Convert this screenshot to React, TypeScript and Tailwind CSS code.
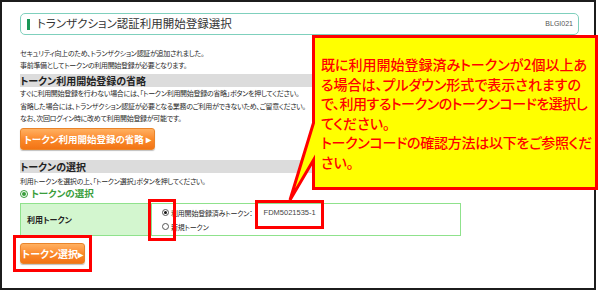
import React from 'react';

function Radio({ checked }: { checked?: boolean }) {
  return (
    <span className="w-[7px] h-[7px] rounded-full border border-[#555] bg-white flex items-center justify-center shrink-0">
      {checked && <span className="w-[3px] h-[3px] rounded-full bg-[#111]" />}
    </span>
  );
}

function OrangeButton({ label, className }: { label: string; className: string }) {
  return (
    <button
      className={`rounded-[3px] border border-[#e9842a] bg-linear-to-b from-[#ffb060] via-[#fb8a2a] to-[#f27414] text-white font-bold whitespace-nowrap flex items-center justify-center shadow-[0_1px_1px_rgba(0,0,0,0.25)] ${className}`}
    >
      {label}
    </button>
  );
}

export default function App() {
  return (
    <div className="relative w-[600px] h-[290px] bg-white font-['Noto_Sans_CJK_JP',sans-serif] [font-feature-settings:'palt'] text-[#2a2a2a] overflow-hidden">
      {/* page frame */}
      <div className="w-[596px] h-[290px] border-2 border-[#1c1c1c] pl-[18px] pr-[15px] pt-[11px]">
        {/* title */}
        <div className="h-[22px] rounded-[5px] border-[1.5px] border-[#7fd0bd] flex items-center pl-[6px] pr-[5px]">
          <span className="w-[3px] h-[11px] bg-[#1a9656]" />
          <span className="ml-[7px] text-[11.5px] leading-none text-[#333]">
            トランザクション認証利用開始登録選択
          </span>
          <span className="ml-auto text-[7px] text-[#555] font-['Liberation_Sans',sans-serif]">BLGI021</span>
        </div>

        {/* intro */}
        <div className="mt-[12px] text-[7px] tracking-[-0.3px] leading-[12px] whitespace-nowrap">
          <p>セキュリティ向上のため、トランザクション認証が追加されました。</p>
          <p>事前準備としてトークンの利用開始登録が必要となります。</p>
        </div>

        {/* skip section */}
        <div className="mt-[3px] h-[13px] bg-[#dcdcdc] flex items-center text-[10px] font-bold text-[#222] leading-none">
          トークン利用開始登録の省略
        </div>
        <div className="text-[7px] tracking-[-0.3px] leading-[12.5px] whitespace-nowrap">
          <p>すぐに利用開始登録を行わない場合には、「トークン利用開始登録の省略」ボタンを押してください。</p>
          <p>省略した場合には、トランザクション認証が必要となる業務のご利用ができないため、ご留意ください。</p>
          <p>なお、次回ログイン時に改めて利用開始登録が可能です。</p>
        </div>
        <OrangeButton label="トークン利用開始登録の省略 ▸" className="mt-[3.5px] h-[22px] w-[135px] text-[9.5px]" />

        {/* select section */}
        <div className="mt-[10px] h-[13px] bg-[#dcdcdc] flex items-center text-[10px] font-bold text-[#222] leading-none">
          トークンの選択
        </div>
        <p className="mt-[2px] text-[7px] tracking-[-0.3px] leading-[12px] whitespace-nowrap">
          利用トークンを選択の上、「トークン選択」ボタンを押してください。
        </p>
        <div className="mt-[1px] h-[12px] flex items-center gap-[3px] text-[9.5px] font-bold text-[#3a9e3c] leading-none">
          <span className="w-[8px] h-[8px] rounded-full border border-[#3a9e3c] flex items-center justify-center">
            <span className="w-[4px] h-[4px] rounded-full bg-[#3a9e3c]" />
          </span>
          トークンの選択
        </div>

        {/* table */}
        <div className="mt-[3px] w-[441px] h-[33px] border border-[#8fe28c] flex">
          <div className="w-[130px] bg-[#d3f6cf] flex items-center pl-[6px] text-[8px] font-bold text-[#222]">
            利用トークン
          </div>
          <div className="flex-1 border-l border-[#8fe28c] pl-[10px] flex flex-col justify-center text-[7px] tracking-[-0.2px] leading-[14px]">
            <div className="flex items-center gap-[2px] whitespace-nowrap">
              <Radio checked />
              <span>利用開始登録済みトークン：</span>
              <span className="ml-[9px] text-[7.5px] tracking-normal font-['Liberation_Sans',sans-serif] text-[#444]">FDM5021535-1</span>
            </div>
            <div className="flex items-center gap-[2px]">
              <Radio />
              <span>新規トークン</span>
            </div>
          </div>
        </div>

        <OrangeButton label="トークン選択▸" className="mt-[7px] h-[21px] w-[65px] text-[10px]" />
      </div>

      {/* annotation: speech bubble */}
      <svg className="absolute left-0 top-0 pointer-events-none" width="600" height="290" viewBox="0 0 600 290">
        <path
          d="M313.5 36.5 H596.5 V188.5 H313.5 V160 L290 200 L313.5 123 Z"
          fill="#ffff00"
          stroke="#ff0000"
          strokeWidth="3"
          strokeLinejoin="miter"
        />
      </svg>
      <div className="absolute left-[321px] top-[55px] text-[14px] leading-[19.5px] text-[#ff0000] font-medium whitespace-nowrap">
        <p>既に利用開始登録済みトークンが2個以上あ</p>
        <p>る場合は、プルダウン形式で表示されますの</p>
        <p className="tracking-[-0.45px]">で、利用するトークンのトークンコードを選択し</p>
        <p>てください。</p>
        <p className="tracking-[-0.25px]">トークンコードの確認方法は以下をご参照くだ</p>
        <p>さい。</p>
      </div>

      {/* annotation: red frames */}
      <div className="absolute left-[148px] top-[199px] w-[28px] h-[42px] border-[3px] border-[#ff0000]" />
      <div className="absolute left-[255px] top-[200px] w-[69px] h-[29px] border-[3px] border-[#ff0000]" />
      <div className="absolute left-[13px] top-[235px] w-[79px] h-[37px] border-[3px] border-[#ff0000]" />
    </div>
  );
}
